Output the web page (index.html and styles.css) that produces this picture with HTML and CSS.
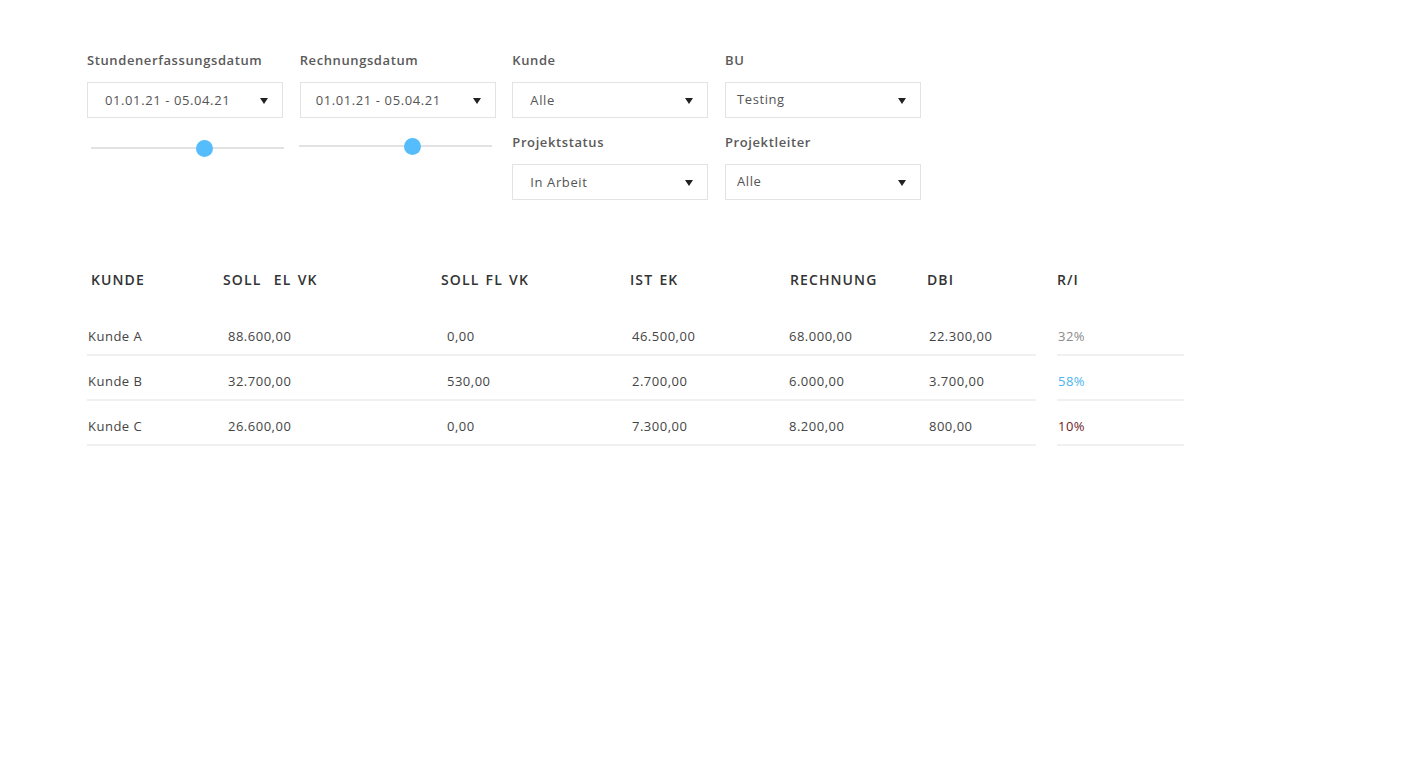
FILE: index.html
```html
<!DOCTYPE html>
<html lang="de">
<head>
<meta charset="utf-8">
<title>Übersicht</title>
<link rel="stylesheet" href="styles.css">
</head>
<body>
<div class="page">
  <div class="filters">
    <div class="filter-col">
      <div class="label">Stundenerfassungsdatum</div>
      <div class="select pad-wide"><span>01.01.21 - 05.04.21</span><i class="arrow"></i></div>
      <div class="slider"><div class="track"></div><div class="thumb"></div></div>
    </div>
    <div class="filter-col col2">
      <div class="label">Rechnungsdatum</div>
      <div class="select pad-mid"><span>01.01.21 - 05.04.21</span><i class="arrow"></i></div>
      <div class="slider"><div class="track"></div><div class="thumb"></div></div>
    </div>
    <div class="filter-col">
      <div class="label">Kunde</div>
      <div class="select pad-wide"><span>Alle</span><i class="arrow"></i></div>
      <div class="label second">Projektstatus</div>
      <div class="select pad-wide"><span>In Arbeit</span><i class="arrow"></i></div>
    </div>
    <div class="filter-col">
      <div class="label">BU</div>
      <div class="select pad-narrow up"><span>Testing</span><i class="arrow"></i></div>
      <div class="label second">Projektleiter</div>
      <div class="select pad-narrow up"><span>Alle</span><i class="arrow"></i></div>
    </div>
  </div>

  <div class="table">
    <div class="row head">
      <div class="main">
        <div>KUNDE</div><div>SOLL&nbsp; EL VK</div><div>SOLL FL VK</div><div>IST EK</div><div>RECHNUNG</div><div>DBI</div>
      </div>
      <div class="ri">R/I</div>
    </div>
    <div class="row">
      <div class="main">
        <div>Kunde A</div><div>88.600,00</div><div>0,00</div><div>46.500,00</div><div>68.000,00</div><div>22.300,00</div>
      </div>
      <div class="ri gray">32%</div>
    </div>
    <div class="row">
      <div class="main">
        <div>Kunde B</div><div>32.700,00</div><div>530,00</div><div>2.700,00</div><div>6.000,00</div><div>3.700,00</div>
      </div>
      <div class="ri blue">58%</div>
    </div>
    <div class="row">
      <div class="main">
        <div>Kunde C</div><div>26.600,00</div><div>0,00</div><div>7.300,00</div><div>8.200,00</div><div>800,00</div>
      </div>
      <div class="ri red">10%</div>
    </div>
  </div>
</div>
</body>
</html>
```

FILE: styles.css
```css
html, body {
  margin: 0;
  padding: 0;
  background: #ffffff;
}

body {
  font-family: "Open Sans", "Noto Sans", sans-serif;
  color: #444;
}

.page {
  padding: 51px 0 0 87px;
}

.filters {
  display: grid;
  grid-template-columns: repeat(4, 196px);
  column-gap: 16.67px;
  align-items: start;
}

.filter-col {
  display: flex;
  flex-direction: column;
}

.label {
  font-size: 13px;
  font-weight: 600;
  line-height: 18px;
  letter-spacing: 0.6px;
  color: #5a5a5a;
  margin-bottom: 13px;
}

.label.second {
  margin-top: 15px;
}

.select {
  box-sizing: border-box;
  height: 36px;
  border: 1px solid #e3e3e3;
  display: flex;
  align-items: center;
  justify-content: space-between;
  padding-right: 14px;
  font-size: 13px;
  letter-spacing: 0.6px;
  color: #555;
}

.select.pad-wide { padding-left: 17px; }
.select.pad-mid { padding-left: 15px; }
.select.pad-narrow { padding-left: 11px; }
.select.up span { position: relative; top: -1px; }

.arrow {
  width: 0;
  height: 0;
  border-left: 4px solid transparent;
  border-right: 4px solid transparent;
  border-top: 6px solid #222;
  margin-top: 2px;
}

.slider {
  position: relative;
  height: 17px;
  margin-top: 22px;
  padding-left: 4px;
}

.col2 .slider {
  padding-left: 0;
  margin-left: -1px;
  margin-top: 20px;
}

.track {
  height: 2px;
  margin-top: 7px;
  background: #e2e2e2;
  width: 193px;
}

.thumb {
  position: absolute;
  top: 0;
  left: 109px;
  width: 17px;
  height: 17px;
  border-radius: 50%;
  background: #55bdfc;
}

.col2 .thumb {
  left: 105px;
}

.table {
  margin-top: 70px;
}

.row {
  display: flex;
  column-gap: 21px;
}

.row .main {
  width: 949px;
  display: grid;
  grid-template-columns: 140px 219px 185px 157px 140px 1fr;
  padding-left: 1px;
  box-sizing: border-box;
}

.row .ri {
  width: 127px;
  padding-left: 1px;
  box-sizing: border-box;
}

.row:not(.head) .main,
.row:not(.head) .ri {
  font-size: 13px;
  line-height: 18px;
  letter-spacing: 0.5px;
  padding-top: 16px;
  padding-bottom: 9px;
  border-bottom: 2px solid #f0f0f0;
}

.row.head .main,
.row.head .ri {
  font-size: 14px;
  font-weight: 600;
  line-height: 20px;
  letter-spacing: 1.1px;
  word-spacing: 1.5px;
  color: #333;
  padding-bottom: 21px;
}

.row.head .main {
  padding-left: 4px;
  grid-template-columns: 132px 218px 189px 160px 137px 1fr;
}

.row.head .ri {
  padding-left: 0;
}

.gray { color: #8a8a8a; }
.blue { color: #4db3ef; }
.red { color: #6e1a22; }
```
